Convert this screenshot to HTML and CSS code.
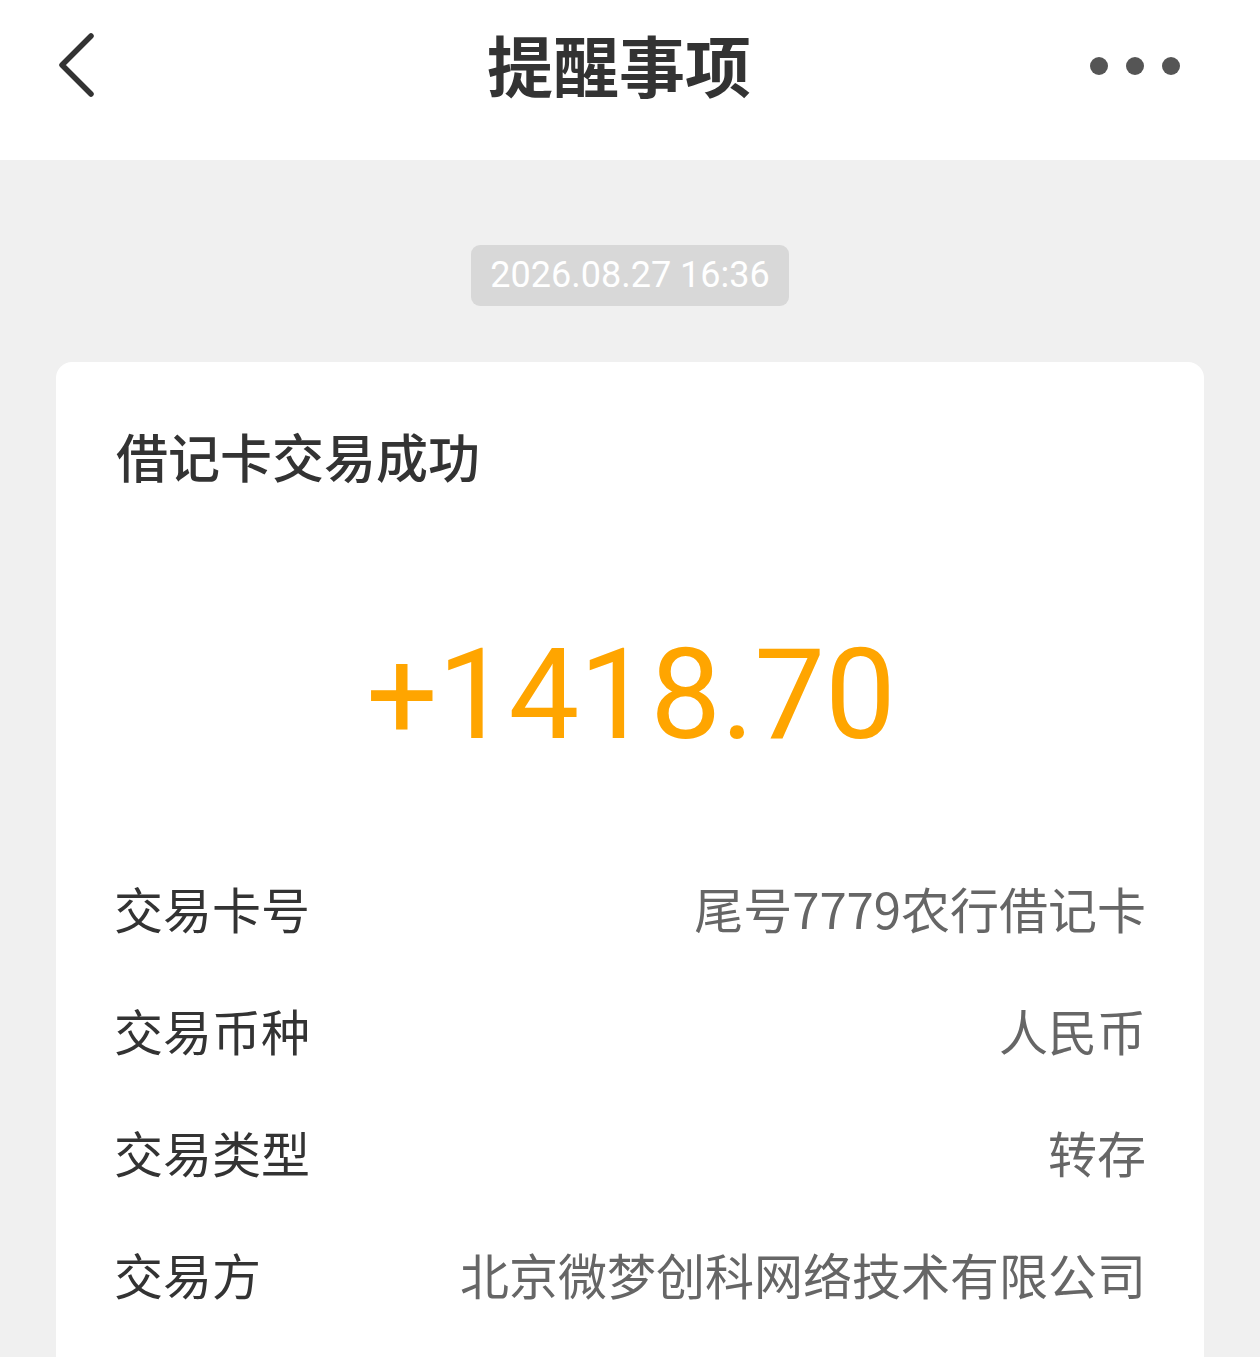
FILE: index.html
```html
<!DOCTYPE html>
<html lang="zh-CN">
<head>
    <meta charset="UTF-8">
    <meta name="viewport" content="width=device-width, initial-scale=1.0">
    <title>提醒事项</title>
    <link rel="stylesheet" href="styles.css">
</head>
<body>
    <div class="top-bar">
        <svg class="back-icon" width="40" height="66" viewBox="0 0 40 66">
            <polyline points="35,4 6,33 35,62" fill="none" stroke="#333" stroke-width="5.5" stroke-linecap="round" stroke-linejoin="round"/>
        </svg>
        <h1>提醒事项</h1>
        <div class="more">
            <span></span><span></span><span></span>
        </div>
    </div>

    <div class="time-wrap">
        <span class="time">2026.08.27 16:36</span>
    </div>

    <div class="card">
        <h2>借记卡交易成功</h2>
        <div class="amount">+1418.70</div>

        <div class="row">
            <span class="label">交易卡号</span>
            <span class="value">尾号7779农行借记卡</span>
        </div>
        <div class="row">
            <span class="label">交易币种</span>
            <span class="value">人民币</span>
        </div>
        <div class="row">
            <span class="label">交易类型</span>
            <span class="value">转存</span>
        </div>
        <div class="row">
            <span class="label">交易方</span>
            <span class="value">北京微梦创科网络技术有限公司</span>
        </div>
    </div>
</body>
</html>
```

FILE: styles.css
```css
body {
    margin: 0;
    background-color: #f0f0f0;
    font-family: "Noto Sans CJK SC", "Noto Sans", sans-serif;
    color: #333;
}
.top-bar {
    height: 160px;
    background-color: #fff;
    display: flex;
    align-items: center;
    justify-content: space-between;
    padding: 0 80px 0 56px;
    box-sizing: border-box;
    position: relative;
}
.back-icon {
    margin-top: -30px;
}
.top-bar h1 {
    position: absolute;
    left: 0;
    right: 22px;
    margin: -34px 0 0;
    text-align: center;
    font-size: 66px;
    font-weight: bold;
    color: #333;
    pointer-events: none;
}
.more {
    display: flex;
    gap: 18px;
    margin-top: -28px;
}
.more span {
    width: 18px;
    height: 18px;
    border-radius: 50%;
    background-color: #555;
}
.time-wrap {
    text-align: center;
    padding-top: 85px;
}
.time {
    display: inline-block;
    background-color: #d8d8d8;
    color: #fff;
    font-family: Roboto, "Noto Sans", sans-serif;
    font-size: 36px;
    line-height: 61px;
    padding: 0 19px;
    border-radius: 9px;
}
.card {
    margin: 56px 56px 0;
    background-color: #fff;
    border-radius: 16px 16px 0 0;
    padding: 58px 58px 40px 60px;
}
.card h2 {
    margin: 0;
    font-size: 52px;
    line-height: 72px;
    font-weight: 500;
    color: #333;
}
.amount {
    margin-top: 123px;
    text-align: center;
    font-family: Roboto, "Noto Sans", sans-serif;
    font-size: 126px;
    line-height: 160px;
    color: #ffa500;
}
.row {
    display: flex;
    justify-content: space-between;
    font-size: 49px;
    line-height: 122px;
}
.amount + .row {
    margin-top: 72px;
}
.label {
    color: #333;
    margin-left: -2px;
}
.value {
    color: #666;
}
```
